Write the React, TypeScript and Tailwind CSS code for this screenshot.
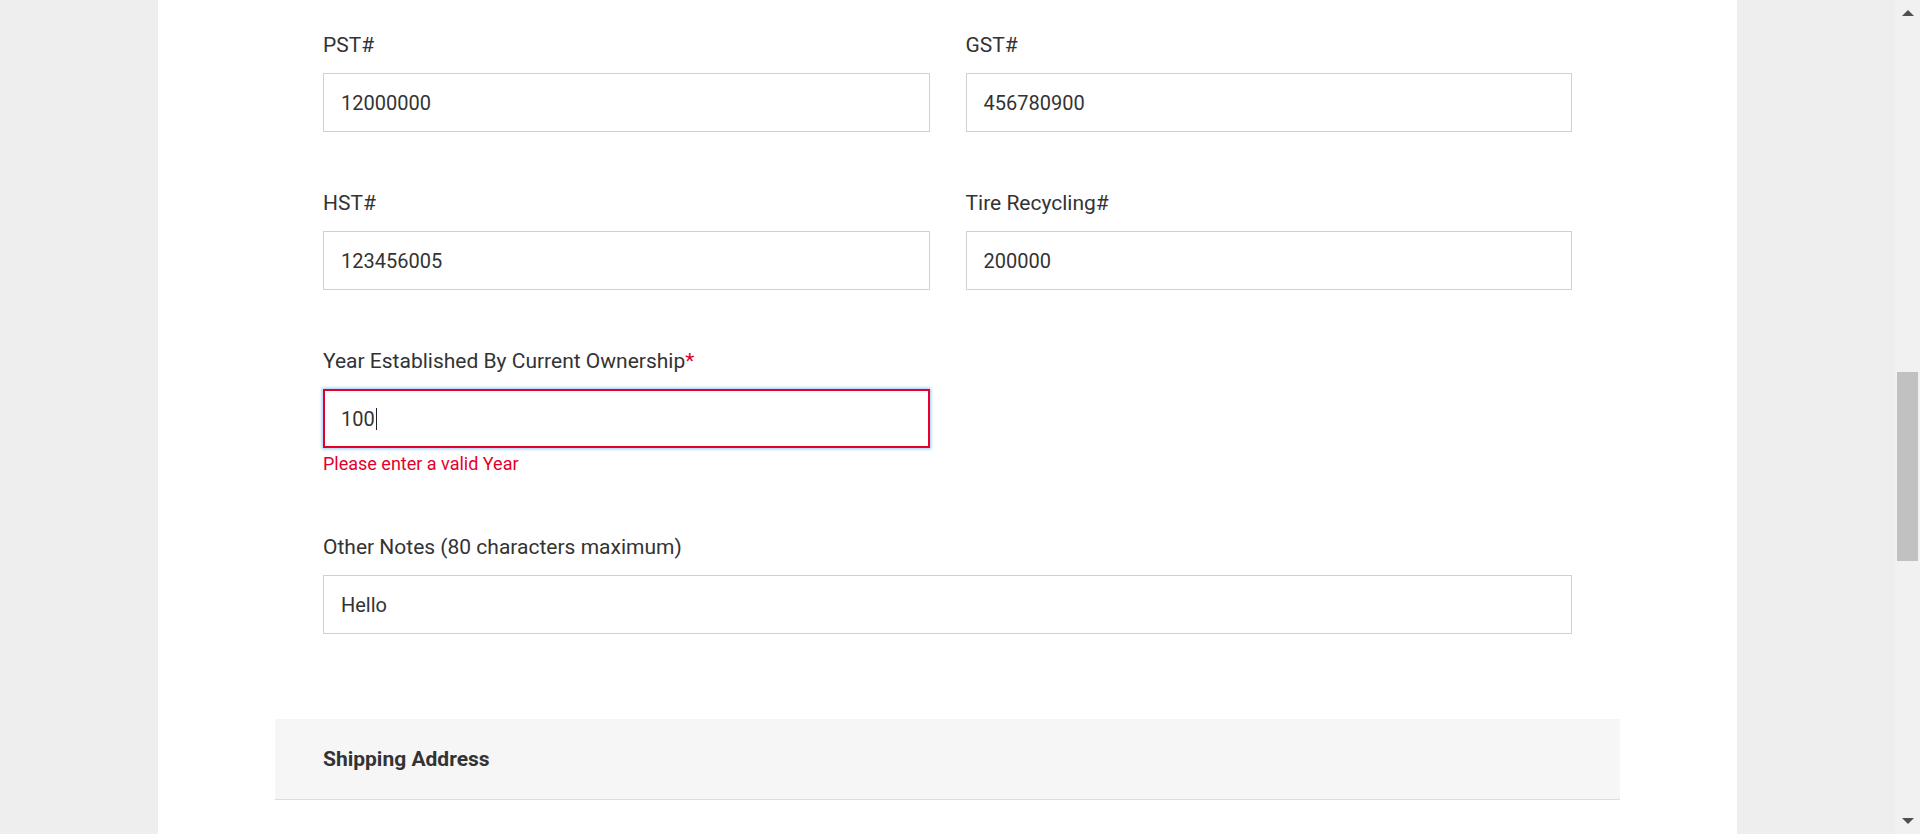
import React from "react";

type FieldProps = {
    label: string;
    value: string;
    required?: boolean;
    error?: string;
    className?: string;
};

function Field({ label, value, required, error, className }: FieldProps) {
    return (
        <div className={className}>
            <label className="block h-[30px] text-[21px] leading-[30px] text-[#333333]">
                {label}
                {required && <span className="text-[#e4002b]">*</span>}
            </label>
            {error ? (
                <>
                    <div className="mt-[13px] flex h-[59px] items-center border-2 border-[#e4002b] bg-white pl-[16px] text-[20px] text-[#333333] shadow-[0_0_3px_1px_rgba(90,160,230,0.6)]">
                        <span>{value}</span>
                        <span className="ml-[1px] inline-block h-[22px] w-px bg-[#222222]" />
                    </div>
                    <p className="mt-[3px] text-[18px] leading-[26px] text-[#e4002b]">{error}</p>
                </>
            ) : (
                <input
                    readOnly
                    value={value}
                    className="mt-[13px] block h-[59px] w-full border border-[#d1d1d1] bg-white pl-[17px] text-[20px] text-[#333333] outline-none"
                />
            )}
        </div>
    );
}

function Scrollbar() {
    return (
        <div className="relative h-full w-[25px] shrink-0 bg-[#f1f1f1]">
            <div className="absolute left-[7px] top-[10px] h-0 w-0 border-x-[6px] border-b-[6px] border-x-transparent border-b-[#505050]" />
            <div className="absolute left-[2px] top-[372px] h-[189px] w-[21px] bg-[#c1c1c1]" />
            <div className="absolute bottom-[10px] left-[7px] h-0 w-0 border-x-[6px] border-t-[6px] border-x-transparent border-t-[#505050]" />
        </div>
    );
}

export default function App() {
    return (
        <div className="flex h-[834px] w-full overflow-hidden bg-[#eeeeee] [font-family:Roboto,'Liberation_Sans',sans-serif]">
            <main className="flex h-full flex-1 justify-center">
                <div className="h-full w-[1579px] bg-white">
                    <div className="mx-[117px]">
                        <div className="grid grid-cols-2 gap-x-[36px] px-[48px] pt-[30px]">
                            <Field label="PST#" value="12000000" />
                            <Field label="GST#" value="456780900" />
                            <Field className="mt-[56px]" label="HST#" value="123456005" />
                            <Field className="mt-[56px]" label="Tire Recycling#" value="200000" />
                            <Field
                                className="mt-[56px]"
                                label="Year Established By Current Ownership"
                                required
                                value="100"
                                error="Please enter a valid Year"
                            />
                            <div />
                            <Field
                                className="col-span-2 mt-[55px]"
                                label="Other Notes (80 characters maximum)"
                                value="Hello"
                            />
                        </div>

                        <div className="mt-[85px] flex h-[81px] items-center border-b border-[#dddddd] bg-[#f6f6f6] px-[48px]">
                            <h2 className="text-[21px] font-bold leading-[30px] text-[#333333]">Shipping Address</h2>
                        </div>
                    </div>
                </div>
            </main>
            <Scrollbar />
        </div>
    );
}
